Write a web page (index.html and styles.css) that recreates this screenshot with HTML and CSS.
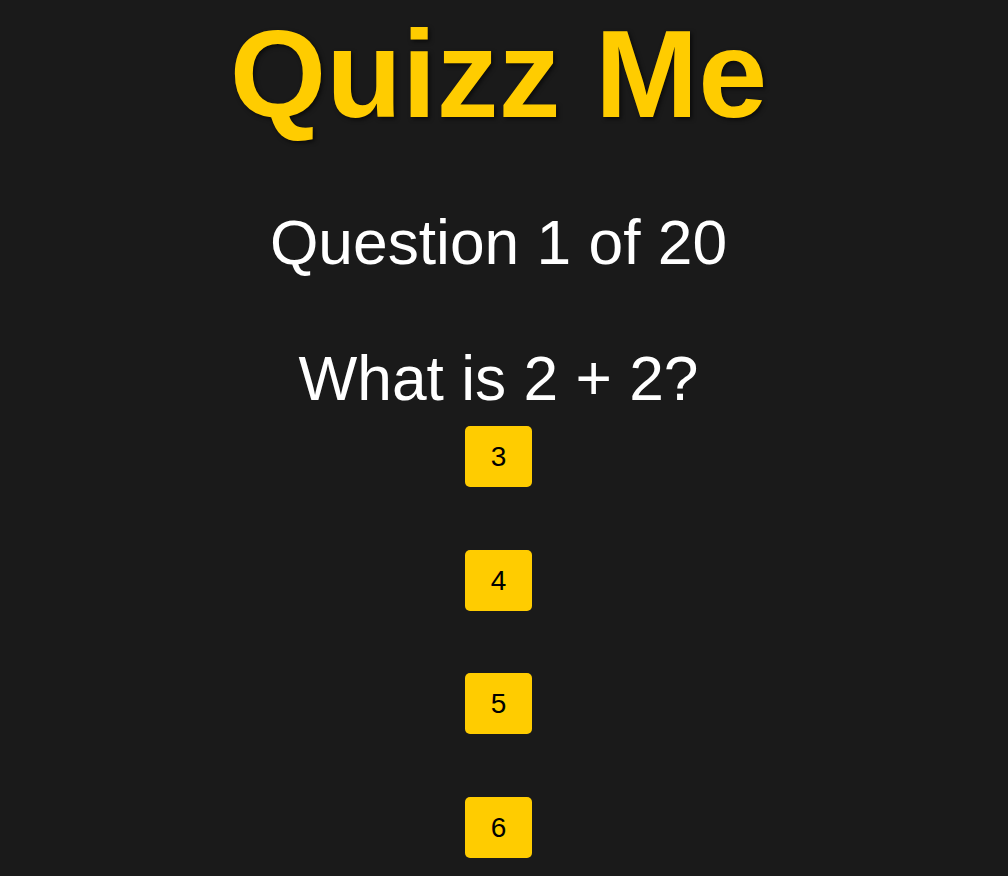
FILE: index.html
```html
<!DOCTYPE html>
<html lang="en">
<head>
<meta charset="utf-8">
<title>Quizz Me</title>
<link rel="stylesheet" href="styles.css">
</head>
<body>
<main class="quiz">
  <h1 class="title">Quizz Me</h1>
  <h2 class="progress">Question 1 of 20</h2>
  <h2 class="question">What is 2 + 2?</h2>
  <div class="answers">
    <button class="answer">3</button>
    <button class="answer">4</button>
    <button class="answer">5</button>
    <button class="answer">6</button>
  </div>
</main>
</body>
</html>
```

FILE: styles.css
```css
html, body {
  margin: 0;
  padding: 0;
  background: #1a1a1a;
}
body {
  font-family: "Liberation Sans", Arial, sans-serif;
  color: #ffffff;
}
.quiz {
  display: flex;
  flex-direction: column;
  align-items: center;
  text-align: center;
  padding-right: 11px;
}
.title {
  margin: 0;
  padding-top: 12px;
  font-size: 124px;
  line-height: 124px;
  font-weight: bold;
  color: #ffcc00;
  text-shadow: 2px 2px 4px rgba(0, 0, 0, 0.6);
}
.progress {
  margin: 76.3px 0 0;
  font-size: 62.3px;
  line-height: 62.3px;
  font-weight: normal;
}
.question {
  margin: 73.2px 0 0;
  font-size: 62.3px;
  line-height: 62.3px;
  font-weight: normal;
}
.answers {
  margin-top: 15.9px;
  display: flex;
  flex-direction: column;
  align-items: center;
  gap: 62.6px;
}
.answer {
  width: 67px;
  height: 61px;
  padding: 0;
  border: none;
  border-radius: 5px;
  background: #ffcc00;
  color: #000000;
  font-family: "Liberation Sans", Arial, sans-serif;
  font-size: 28px;
  line-height: 61px;
  cursor: pointer;
}
```
